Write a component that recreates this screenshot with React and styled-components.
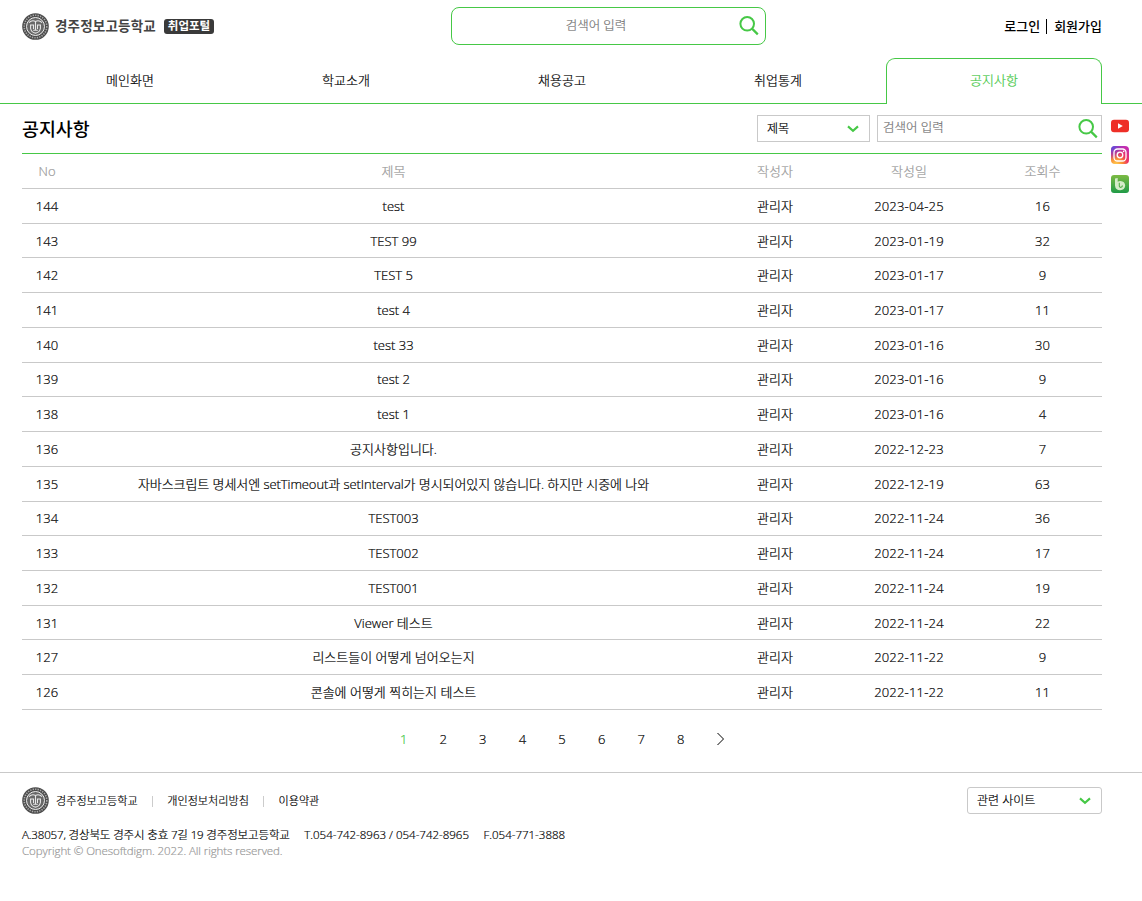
import React from "react";
import styled, { createGlobalStyle } from "styled-components";

const green = "#46c846";
const line = "#c9c9c9";

const GlobalStyle = createGlobalStyle`
  * { box-sizing: border-box; }
  body {
    margin: 0;
    background: #fff;
    color: #000;
    font-family: "Open Sans", "Noto Sans CJK KR", sans-serif;
    font-size: 13px;
    font-weight: 300;
    line-height: 18px;
    -webkit-text-stroke: 0.2px currentColor;
  }
  input, button { font: inherit; color: inherit; }
  a { color: inherit; text-decoration: none; }
  #root { height: 901px; overflow: hidden; }
`;

const Header = styled.header`
  display: grid;
  grid-template-columns: 429px 315px 1fr;
  height: 58px;
  padding: 7px 40px 0 22px;
`;

const Logo = styled.a`
  display: flex;
  align-items: center;
  height: 38px;
  -webkit-text-stroke: 0;
`;

const LogoName = styled.span`
  margin-left: 6px;
  width: 109px;
  font-size: 13.5px;
  font-weight: 700;
  letter-spacing: 0.2px;
  color: #444;
  white-space: nowrap;
`;

const LogoBadge = styled.span`
  width: 50px;
  height: 15px;
  border-radius: 3px;
  background: #3a3a3a;
  color: #fff;
  font-size: 11.5px;
  font-weight: 700;
  line-height: 14px;
  text-align: center;
`;

const SearchBox = styled.label`
  display: flex;
  align-items: center;
  height: 38px;
  padding: 0 6px 0 1px;
  border: 1px solid ${green};
  border-radius: 8px;
`;

const SearchInput = styled.input`
  flex: 1;
  min-width: 0;
  padding: 0 0 1px;
  border: 0;
  outline: 0;
  background: none;
  font-size: 12.5px;
  text-align: ${(p) => p.$align || "left"};
  &::placeholder { color: #757575; opacity: 1; }
`;

const Account = styled.nav`
  display: flex;
  justify-content: flex-end;
  align-items: center;
  height: 38px;
  font-weight: 500;
  -webkit-text-stroke: 0;
`;

const AccountDivider = styled.i`
  width: 1px;
  height: 15px;
  margin: 0 7px 0 6px;
  background: #000;
`;

const Tabs = styled.nav`
  display: grid;
  grid-template-columns: 22px repeat(5, 216px) 1fr;
  height: 46px;
  &::before, &::after { content: ""; border-bottom: 1px solid ${green}; }
`;

const Tab = styled.a`
  display: flex;
  justify-content: center;
  align-items: center;
  padding-bottom: ${(p) => (p.$active ? 3 : 1)}px;
  border: 1px solid ${green};
  border-radius: ${(p) => (p.$active ? "9px 9px 0 0" : 0)};
  border-width: ${(p) => (p.$active ? "1px 1px 0" : "0 0 1px")};
  color: ${(p) => (p.$active ? green : "#000")};
`;

const Body = styled.main`
  display: flex;
  align-items: flex-start;
  gap: 9px;
  height: 668px;
  padding-left: 22px;
`;

const Board = styled.section`
  width: 1080px;
`;

const BoardHead = styled.div`
  display: flex;
  align-items: flex-start;
  height: 49px;
  padding-top: 11px;
`;

const BoardTitle = styled.h1`
  flex: 1;
  margin: 0;
  font-size: 18.4px;
  font-weight: 500;
  line-height: 28px;
  -webkit-text-stroke: 0;
`;

const SelectBox = styled.button`
  display: flex;
  justify-content: space-between;
  align-items: center;
  width: ${(p) => p.$width}px;
  height: 27px;
  padding: ${(p) => p.$drop || 0}px 10px 0 9px;
  border: 1px solid ${line};
  border-radius: ${(p) => p.$radius || 0}px;
  background: #fff;
  font-size: 12px;
`;

const FilterBox = styled.label`
  display: flex;
  align-items: center;
  width: 225px;
  height: 27px;
  margin-left: 7px;
  padding: 0 3px 0 5px;
  border: 1px solid ${line};
`;

const Table = styled.div`
  border-top: 1px solid ${green};
`;

const Row = styled.div`
  display: grid;
  grid-template-columns: 50px 643px 120px 148px 119px;
  align-items: center;
  height: ${(p) => (p.$head ? 35.04 : 34.72)}px;
  border-bottom: 1px solid ${line};
  text-align: center;
  color: ${(p) => (p.$head ? "#999" : "#000")};
`;

const Cell = styled.span`
  white-space: nowrap;
  letter-spacing: ${(p) => p.$spacing || 0}px;
`;

const Pager = styled.nav`
  display: flex;
  justify-content: center;
  align-items: center;
  height: 58px;
`;

const PageLink = styled.a`
  display: flex;
  justify-content: center;
  width: 39.6px;
  color: ${(p) => (p.$active ? green : "#000")};
`;

const Social = styled.aside`
  display: flex;
  flex-direction: column;
  gap: 11px;
  padding-top: 13px;
  svg { display: block; }
`;

const Footer = styled.footer`
  padding: 13px 40px 0 22px;
  border-top: 1px solid ${line};
  font-size: 12px;
`;

const FooterTop = styled.div`
  display: flex;
  align-items: center;
  height: 28px;
`;

const FooterLinks = styled.nav`
  display: flex;
  flex: 1;
  align-items: center;
  margin-left: 7px;
  padding-top: 2px;
  font-size: 11.1px;
`;

const FooterDivider = styled.i`
  width: 1px;
  height: 11px;
  margin: 0 14.3px;
  background: #ccc;
`;

const Contact = styled.address`
  display: flex;
  gap: 14.5px;
  margin-top: 12px;
  font-size: 11.5px;
  font-style: normal;
  line-height: 17px;
  white-space: nowrap;
`;

const Address = styled.span`
  letter-spacing: -0.15px;
`;

const Copyright = styled.p`
  margin: 0;
  color: #999;
  font-size: 11.5px;
  letter-spacing: -0.09px;
  line-height: 16px;
`;

function Emblem() {
  return (
    <svg width="27" height="27" viewBox="0 0 27 27" fill="none">
      <circle cx="13.5" cy="13.5" r="13.3" fill="#4c4c4c" />
      <circle cx="13.5" cy="13.5" r="11.3" stroke="#aaa" strokeWidth="1.6" strokeDasharray="1.3 1.2" />
      <circle cx="13.5" cy="13.5" r="9" fill="#686868" stroke="#eee" strokeWidth="1" />
      <path d="M7 9.6q3-3 6.5-1.2 3.5-1.8 6.5 1.2M8 12h3.5v4M19 12h-3.5v4M8.6 12v3.5q1 4.3 4.9 4.6 3.9-.3 4.9-4.6V12M13.5 8v9.5M11.2 17.3h4.6" stroke="#e8e8e8" strokeWidth="1.1" />
    </svg>
  );
}

function SearchIcon() {
  return (
    <svg width="20" height="20" viewBox="0 0 20 20" fill="none" stroke={green} strokeWidth="2">
      <circle cx="8.2" cy="7.8" r="6.8" />
      <path d="M13 12.6l5.8 5.8" strokeWidth="2.2" />
    </svg>
  );
}

function ChevronDown() {
  return (
    <svg width="12" height="8" viewBox="0 0 12 8" fill="none" stroke={green} strokeWidth="2.1">
      <path d="M1 1.4l5 4.4 5-4.4" />
    </svg>
  );
}

function ChevronRight() {
  return (
    <svg width="8" height="18" viewBox="0 0 8 18" fill="none" stroke="#000">
      <path d="M1.5 3l6 6-6 6" />
    </svg>
  );
}

function YoutubeIcon() {
  return (
    <svg width="18" height="18" viewBox="0 0 18 18">
      <rect y="2.7" width="18" height="12.6" rx="3" fill="#ee2f27" />
      <path d="M7 6.2l4.8 2.8L7 11.8z" fill="#fff" />
    </svg>
  );
}

function InstagramIcon() {
  return (
    <svg width="18" height="18" viewBox="0 0 18 18">
      <defs>
        <radialGradient id="warm" cx=".28" cy="1.05" r="1.1">
          <stop offset="0" stopColor="#ffd34f" />
          <stop offset=".35" stopColor="#f98a35" />
          <stop offset=".6" stopColor="#ee3660" />
          <stop offset="1" stopColor="#c52cb0" />
        </radialGradient>
        <radialGradient id="cool" cx="0" cy="0" r=".8">
          <stop offset="0" stopColor="#4056e8" />
          <stop offset="1" stopColor="#8038dd" stopOpacity="0" />
        </radialGradient>
      </defs>
      <rect width="18" height="18" rx="4" fill="url(#warm)" />
      <rect width="18" height="18" rx="4" fill="url(#cool)" />
      <g fill="none" stroke="#fff" strokeWidth="1.3">
        <rect x="3" y="3" width="12" height="12" rx="3.5" />
        <circle cx="9" cy="9" r="2.8" />
      </g>
      <circle cx="12.6" cy="5.4" r=".8" fill="#fff" />
    </svg>
  );
}

function BandIcon() {
  return (
    <svg width="18" height="18" viewBox="0 0 18 18">
      <defs>
        <linearGradient id="leaf" x2="0" y2="1">
          <stop stopColor="#7cba43" />
          <stop offset="1" stopColor="#219b48" />
        </linearGradient>
      </defs>
      <rect width="18" height="18" rx="3" fill="url(#leaf)" />
      <path d="M4 3.5l2.7-.6v3.9q1.1-.8 2.8-.8 4.4.3 4.7 4.6-.4 4.4-5 4.7-4.8-.2-5.2-4.8z" fill="#d5ecc9" />
      <path d="M8.3 7.8v3.1q.3 1.7 1.8 1.4 1.5-.5 1.2-2" fill="none" stroke="#55ae49" strokeWidth="1.1" />
    </svg>
  );
}

const tabs = ["메인화면", "학교소개", "채용공고", "취업통계", "공지사항"];

const posts = [
  [144, "test", "2023-04-25", 16],
  [143, "TEST 99", "2023-01-19", 32],
  [142, "TEST 5", "2023-01-17", 9],
  [141, "test 4", "2023-01-17", 11],
  [140, "test 33", "2023-01-16", 30],
  [139, "test 2", "2023-01-16", 9],
  [138, "test 1", "2023-01-16", 4],
  [136, "공지사항입니다.", "2022-12-23", 7],
  [135, "자바스크립트 명세서엔 setTimeout과 setInterval가 명시되어있지 않습니다. 하지만 시중에 나와", "2022-12-19", 63],
  [134, "TEST003", "2022-11-24", 36],
  [133, "TEST002", "2022-11-24", 17],
  [132, "TEST001", "2022-11-24", 19],
  [131, "Viewer 테스트", "2022-11-24", 22],
  [127, "리스트들이 어떻게 넘어오는지", "2022-11-22", 9],
  [126, "콘솔에 어떻게 찍히는지 테스트", "2022-11-22", 11],
];

export default function App() {
  return (
    <>
      <GlobalStyle />
      <Header>
        <Logo>
          <Emblem />
          <LogoName>경주정보고등학교</LogoName>
          <LogoBadge>취업포털</LogoBadge>
        </Logo>
        <SearchBox>
          <SearchInput $align="center" placeholder="검색어 입력" />
          <SearchIcon />
        </SearchBox>
        <Account>
          <a>로그인</a>
          <AccountDivider />
          <a>회원가입</a>
        </Account>
      </Header>
      <Tabs>
        {tabs.map((name, i) => (
          <Tab key={name} $active={i === 4}>{name}</Tab>
        ))}
      </Tabs>
      <Body>
        <Board>
          <BoardHead>
            <BoardTitle>공지사항</BoardTitle>
            <SelectBox $width={113}>제목<ChevronDown /></SelectBox>
            <FilterBox>
              <SearchInput placeholder="검색어 입력" />
              <SearchIcon />
            </FilterBox>
          </BoardHead>
          <Table>
            <Row $head>
              <Cell>No</Cell>
              <Cell>제목</Cell>
              <Cell>작성자</Cell>
              <Cell>작성일</Cell>
              <Cell>조회수</Cell>
            </Row>
            {posts.map(([no, title, date, views]) => (
              <Row key={no}>
                <Cell>{no}</Cell>
                <Cell $spacing={title.length > 30 ? -0.07 : 0}>{title}</Cell>
                <Cell>관리자</Cell>
                <Cell $spacing={0.2}>{date}</Cell>
                <Cell>{views}</Cell>
              </Row>
            ))}
          </Table>
          <Pager>
            {[1, 2, 3, 4, 5, 6, 7, 8].map((n) => (
              <PageLink key={n} $active={n === 1}>{n}</PageLink>
            ))}
            <PageLink><ChevronRight /></PageLink>
          </Pager>
        </Board>
        <Social>
          <YoutubeIcon />
          <InstagramIcon />
          <BandIcon />
        </Social>
      </Body>
      <Footer>
        <FooterTop>
          <Emblem />
          <FooterLinks>
            <a>경주정보고등학교</a>
            <FooterDivider />
            <a>개인정보처리방침</a>
            <FooterDivider />
            <a>이용약관</a>
          </FooterLinks>
          <SelectBox $width={135} $radius={3} $drop={2}>관련 사이트<ChevronDown /></SelectBox>
        </FooterTop>
        <Contact>
          <Address>A.38057, 경상북도 경주시 충효 7길 19 경주정보고등학교</Address>
          <span>T.054-742-8963 / 054-742-8965</span>
          <span>F.054-771-3888</span>
        </Contact>
        <Copyright>Copyright © Onesoftdigm. 2022. All rights reserved.</Copyright>
      </Footer>
    </>
  );
}
